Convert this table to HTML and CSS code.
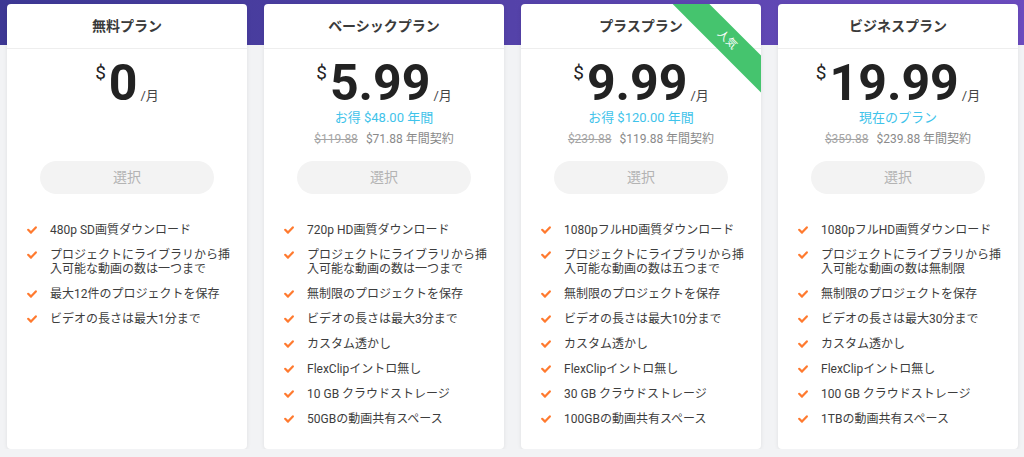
FILE: index.html
```html
<!DOCTYPE html>
<html lang="ja">
<head>
    <meta charset="UTF-8">
    <meta name="viewport" content="width=device-width, initial-scale=1.0">
    <title>料金プラン</title>
    <link rel="stylesheet" href="styles.css">
</head>
<body>
<div class="plans">
    <!-- 無料 -->
    <div class="plan">
        <div class="plan-head">無料プラン</div>
        <div class="price-box">
            <div class="price"><span class="cur">$</span><span class="num">0</span><span class="per">/月</span></div>
        </div>
        <div class="btn">選択</div>
        <ul class="features">
            <li><svg viewBox="0 0 10 8"><path d="M1.2 3.8 L4 6.6 L8.8 1.4"/></svg><span>480p SD画質ダウンロード</span></li>
            <li><svg viewBox="0 0 10 8"><path d="M1.2 3.8 L4 6.6 L8.8 1.4"/></svg><span>プロジェクトにライブラリから挿入可能な動画の数は一つまで</span></li>
            <li><svg viewBox="0 0 10 8"><path d="M1.2 3.8 L4 6.6 L8.8 1.4"/></svg><span>最大12件のプロジェクトを保存</span></li>
            <li><svg viewBox="0 0 10 8"><path d="M1.2 3.8 L4 6.6 L8.8 1.4"/></svg><span>ビデオの長さは最大1分まで</span></li>
        </ul>
    </div>

    <!-- ベーシック -->
    <div class="plan">
        <div class="plan-head">ベーシックプラン</div>
        <div class="price-box">
            <div class="price"><span class="cur">$</span><span class="num">5.99</span><span class="per">/月</span></div>
            <div class="save">お得 $48.00 年間</div>
            <div class="yearly"><s>$119.88</s><span>$71.88 年間契約</span></div>
        </div>
        <div class="btn">選択</div>
        <ul class="features">
            <li><svg viewBox="0 0 10 8"><path d="M1.2 3.8 L4 6.6 L8.8 1.4"/></svg><span>720p HD画質ダウンロード</span></li>
            <li><svg viewBox="0 0 10 8"><path d="M1.2 3.8 L4 6.6 L8.8 1.4"/></svg><span>プロジェクトにライブラリから挿入可能な動画の数は一つまで</span></li>
            <li><svg viewBox="0 0 10 8"><path d="M1.2 3.8 L4 6.6 L8.8 1.4"/></svg><span>無制限のプロジェクトを保存</span></li>
            <li><svg viewBox="0 0 10 8"><path d="M1.2 3.8 L4 6.6 L8.8 1.4"/></svg><span>ビデオの長さは最大3分まで</span></li>
            <li><svg viewBox="0 0 10 8"><path d="M1.2 3.8 L4 6.6 L8.8 1.4"/></svg><span>カスタム透かし</span></li>
            <li><svg viewBox="0 0 10 8"><path d="M1.2 3.8 L4 6.6 L8.8 1.4"/></svg><span>FlexClipイントロ無し</span></li>
            <li><svg viewBox="0 0 10 8"><path d="M1.2 3.8 L4 6.6 L8.8 1.4"/></svg><span>10 GB クラウドストレージ</span></li>
            <li><svg viewBox="0 0 10 8"><path d="M1.2 3.8 L4 6.6 L8.8 1.4"/></svg><span>50GBの動画共有スペース</span></li>
        </ul>
    </div>

    <!-- プラス -->
    <div class="plan">
        <div class="ribbon">人気</div>
        <div class="plan-head">プラスプラン</div>
        <div class="price-box">
            <div class="price"><span class="cur">$</span><span class="num">9.99</span><span class="per">/月</span></div>
            <div class="save">お得 $120.00 年間</div>
            <div class="yearly"><s>$239.88</s><span>$119.88 年間契約</span></div>
        </div>
        <div class="btn">選択</div>
        <ul class="features">
            <li><svg viewBox="0 0 10 8"><path d="M1.2 3.8 L4 6.6 L8.8 1.4"/></svg><span>1080pフルHD画質ダウンロード</span></li>
            <li><svg viewBox="0 0 10 8"><path d="M1.2 3.8 L4 6.6 L8.8 1.4"/></svg><span>プロジェクトにライブラリから挿入可能な動画の数は五つまで</span></li>
            <li><svg viewBox="0 0 10 8"><path d="M1.2 3.8 L4 6.6 L8.8 1.4"/></svg><span>無制限のプロジェクトを保存</span></li>
            <li><svg viewBox="0 0 10 8"><path d="M1.2 3.8 L4 6.6 L8.8 1.4"/></svg><span>ビデオの長さは最大10分まで</span></li>
            <li><svg viewBox="0 0 10 8"><path d="M1.2 3.8 L4 6.6 L8.8 1.4"/></svg><span>カスタム透かし</span></li>
            <li><svg viewBox="0 0 10 8"><path d="M1.2 3.8 L4 6.6 L8.8 1.4"/></svg><span>FlexClipイントロ無し</span></li>
            <li><svg viewBox="0 0 10 8"><path d="M1.2 3.8 L4 6.6 L8.8 1.4"/></svg><span>30 GB クラウドストレージ</span></li>
            <li><svg viewBox="0 0 10 8"><path d="M1.2 3.8 L4 6.6 L8.8 1.4"/></svg><span>100GBの動画共有スペース</span></li>
        </ul>
    </div>

    <!-- ビジネス -->
    <div class="plan">
        <div class="plan-head">ビジネスプラン</div>
        <div class="price-box">
            <div class="price"><span class="cur">$</span><span class="num">19.99</span><span class="per">/月</span></div>
            <div class="save">現在のプラン</div>
            <div class="yearly"><s>$359.88</s><span>$239.88 年間契約</span></div>
        </div>
        <div class="btn">選択</div>
        <ul class="features">
            <li><svg viewBox="0 0 10 8"><path d="M1.2 3.8 L4 6.6 L8.8 1.4"/></svg><span>1080pフルHD画質ダウンロード</span></li>
            <li><svg viewBox="0 0 10 8"><path d="M1.2 3.8 L4 6.6 L8.8 1.4"/></svg><span>プロジェクトにライブラリから挿入可能な動画の数は無制限</span></li>
            <li><svg viewBox="0 0 10 8"><path d="M1.2 3.8 L4 6.6 L8.8 1.4"/></svg><span>無制限のプロジェクトを保存</span></li>
            <li><svg viewBox="0 0 10 8"><path d="M1.2 3.8 L4 6.6 L8.8 1.4"/></svg><span>ビデオの長さは最大30分まで</span></li>
            <li><svg viewBox="0 0 10 8"><path d="M1.2 3.8 L4 6.6 L8.8 1.4"/></svg><span>カスタム透かし</span></li>
            <li><svg viewBox="0 0 10 8"><path d="M1.2 3.8 L4 6.6 L8.8 1.4"/></svg><span>FlexClipイントロ無し</span></li>
            <li><svg viewBox="0 0 10 8"><path d="M1.2 3.8 L4 6.6 L8.8 1.4"/></svg><span>100 GB クラウドストレージ</span></li>
            <li><svg viewBox="0 0 10 8"><path d="M1.2 3.8 L4 6.6 L8.8 1.4"/></svg><span>1TBの動画共有スペース</span></li>
        </ul>
    </div>
</div>
</body>
</html>
```
FILE: styles.css
```css
body {
    margin: 0;
    font-family: Roboto, "Noto Sans CJK JP", sans-serif;
    color: #333;
    background: linear-gradient(to right, #3d3894, #6b4cbe) top left / 100% 45px no-repeat, #f2f3f5;
}

.plans {
    display: flex;
    gap: 17px;
    padding: 4px 6px 0 7px;
}

.plan {
    flex: 0 0 240px;
    position: relative;
    overflow: hidden;
    background: #fff;
    border-radius: 4px;
    box-shadow: 0 1px 4px rgba(0, 0, 0, 0.08);
}

.plan-head {
    height: 44px;
    line-height: 44px;
    text-align: center;
    font-size: 14px;
    font-weight: bold;
    color: #3a3a3a;
    border-bottom: 1px solid #eee;
}

.price-box {
    height: 112px;
    box-sizing: border-box;
    padding-top: 9px;
    text-align: center;
}

.price {
    line-height: 50px;
    height: 50px;
    color: #222;
    white-space: nowrap;
}

.cur {
    display: inline-block;
    vertical-align: top;
    font-size: 19px;
    line-height: 19px;
    padding-top: 5px;
    margin-right: 3px;
}

.num {
    font-size: 50px;
    font-weight: bold;
    line-height: 50px;
}

.per {
    font-size: 13px;
    line-height: 15px;
    margin-left: 3px;
    color: #444;
}

.save {
    margin-top: 2px;
    font-size: 13px;
    line-height: 16px;
    color: #3fc3ea;
}

.yearly {
    margin-top: 5px;
    font-size: 12px;
    line-height: 16px;
    color: #8a8a8a;
}

.yearly s {
    color: #a5a5a5;
    margin-right: 8px;
}

.btn {
    width: 174px;
    height: 33px;
    line-height: 33px;
    margin: 0 auto;
    border-radius: 17px;
    background: #f3f3f3;
    color: #b3b3b3;
    text-align: center;
    font-size: 14px;
}

.features {
    list-style: none;
    margin: 29px 0 0;
    padding: 0 15px 23px 20px;
    display: flex;
    flex-direction: column;
    gap: 11px;
}

.features li {
    display: flex;
    align-items: flex-start;
    font-size: 12px;
    line-height: 14px;
    color: #3d3d3d;
}

.features svg {
    flex: 0 0 10px;
    width: 10px;
    height: 8px;
    margin: 3px 13px 0 0;
    fill: none;
    stroke: #ff7a2f;
    stroke-width: 2.2;
    stroke-linecap: round;
    stroke-linejoin: round;
}

.ribbon {
    position: absolute;
    top: 23px;
    right: -36px;
    width: 140px;
    height: 26px;
    line-height: 26px;
    background: #45c46e;
    color: #fff;
    font-size: 11px;
    text-align: center;
    transform: rotate(45deg);
}
```
